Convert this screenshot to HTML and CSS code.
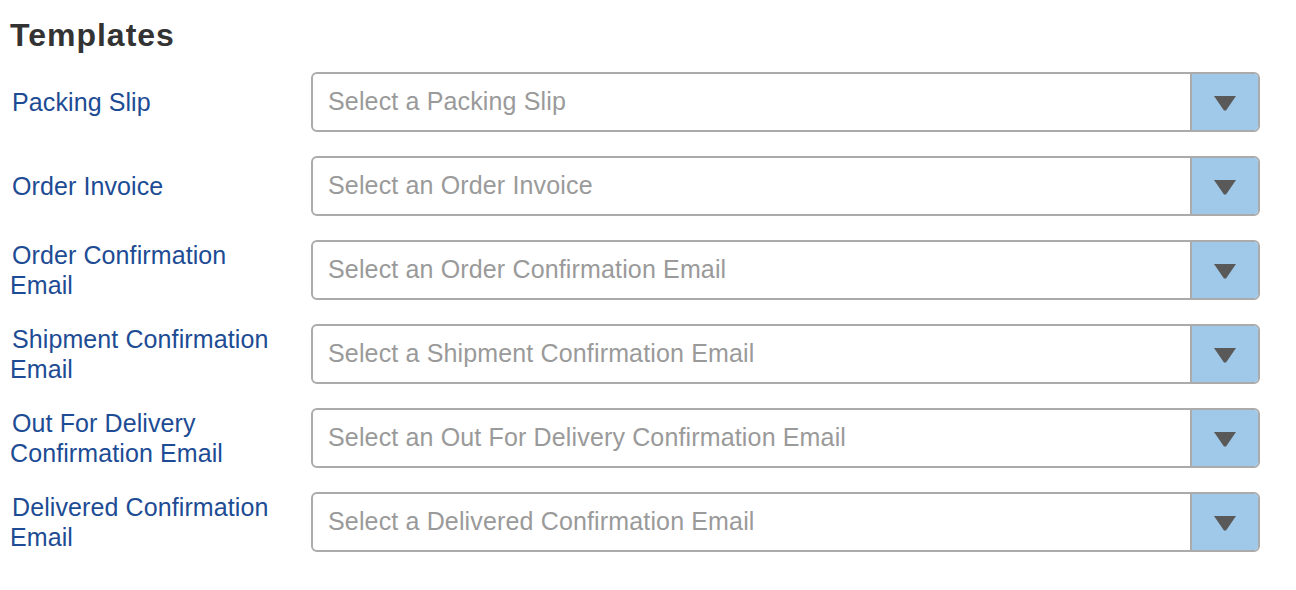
FILE: index.html
```html
<!DOCTYPE html>
<html lang="en">
<head>
<meta charset="utf-8">
<title>Templates</title>
<link rel="stylesheet" href="styles.css">
</head>
<body>
<div class="page">
  <h2 class="title">Templates</h2>
  <div class="form">
    <label class="label">Packing Slip</label>
    <div class="select"><span class="value">Select a Packing Slip</span><span class="btn"><svg width="22" height="15" viewBox="0 0 22 15"><polygon points="0,0 22,0 12,14.5 10,14.5" fill="#595959"/></svg></span></div>

    <label class="label">Order Invoice</label>
    <div class="select"><span class="value">Select an Order Invoice</span><span class="btn"><svg width="22" height="15" viewBox="0 0 22 15"><polygon points="0,0 22,0 12,14.5 10,14.5" fill="#595959"/></svg></span></div>

    <label class="label">Order Confirmation Email</label>
    <div class="select"><span class="value">Select an Order Confirmation Email</span><span class="btn"><svg width="22" height="15" viewBox="0 0 22 15"><polygon points="0,0 22,0 12,14.5 10,14.5" fill="#595959"/></svg></span></div>

    <label class="label">Shipment Confirmation Email</label>
    <div class="select"><span class="value">Select a Shipment Confirmation Email</span><span class="btn"><svg width="22" height="15" viewBox="0 0 22 15"><polygon points="0,0 22,0 12,14.5 10,14.5" fill="#595959"/></svg></span></div>

    <label class="label">Out For Delivery Confirmation Email</label>
    <div class="select"><span class="value">Select an Out For Delivery Confirmation Email</span><span class="btn"><svg width="22" height="15" viewBox="0 0 22 15"><polygon points="0,0 22,0 12,14.5 10,14.5" fill="#595959"/></svg></span></div>

    <label class="label">Delivered Confirmation Email</label>
    <div class="select"><span class="value">Select a Delivered Confirmation Email</span><span class="btn"><svg width="22" height="15" viewBox="0 0 22 15"><polygon points="0,0 22,0 12,14.5 10,14.5" fill="#595959"/></svg></span></div>
  </div>
</div>
</body>
</html>
```

FILE: styles.css
```css
* { box-sizing: border-box; }

body {
  margin: 0;
  background: #ffffff;
  font-family: "Liberation Sans", Arial, Helvetica, sans-serif;
}

.page {
  padding: 17px 36px 0 10px;
}

.title {
  margin: 0 0 18px 0;
  font-size: 32px;
  line-height: 37px;
  font-weight: bold;
  letter-spacing: 1px;
  color: #333333;
}

.form {
  display: grid;
  grid-template-columns: 280px 1fr;
  column-gap: 21px;
  row-gap: 24px;
  align-items: center;
}

.label {
  font-size: 25px;
  line-height: 30px;
  letter-spacing: 0.1px;
  color: #1d4c94;
  text-indent: 2px;
}

.select {
  display: flex;
  height: 60px;
  border: 2px solid #ababab;
  border-radius: 6px;
  overflow: hidden;
  background: #ffffff;
}

.value {
  flex: 1;
  display: flex;
  align-items: center;
  padding-left: 15px;
  padding-bottom: 1px;
  font-size: 25px;
  letter-spacing: 0.15px;
  color: #9a9a9a;
}

.btn {
  width: 68px;
  display: flex;
  align-items: center;
  justify-content: center;
  padding-top: 3px;
  border-left: 2px solid #ababab;
  background: #a0c8e8;
}
```
